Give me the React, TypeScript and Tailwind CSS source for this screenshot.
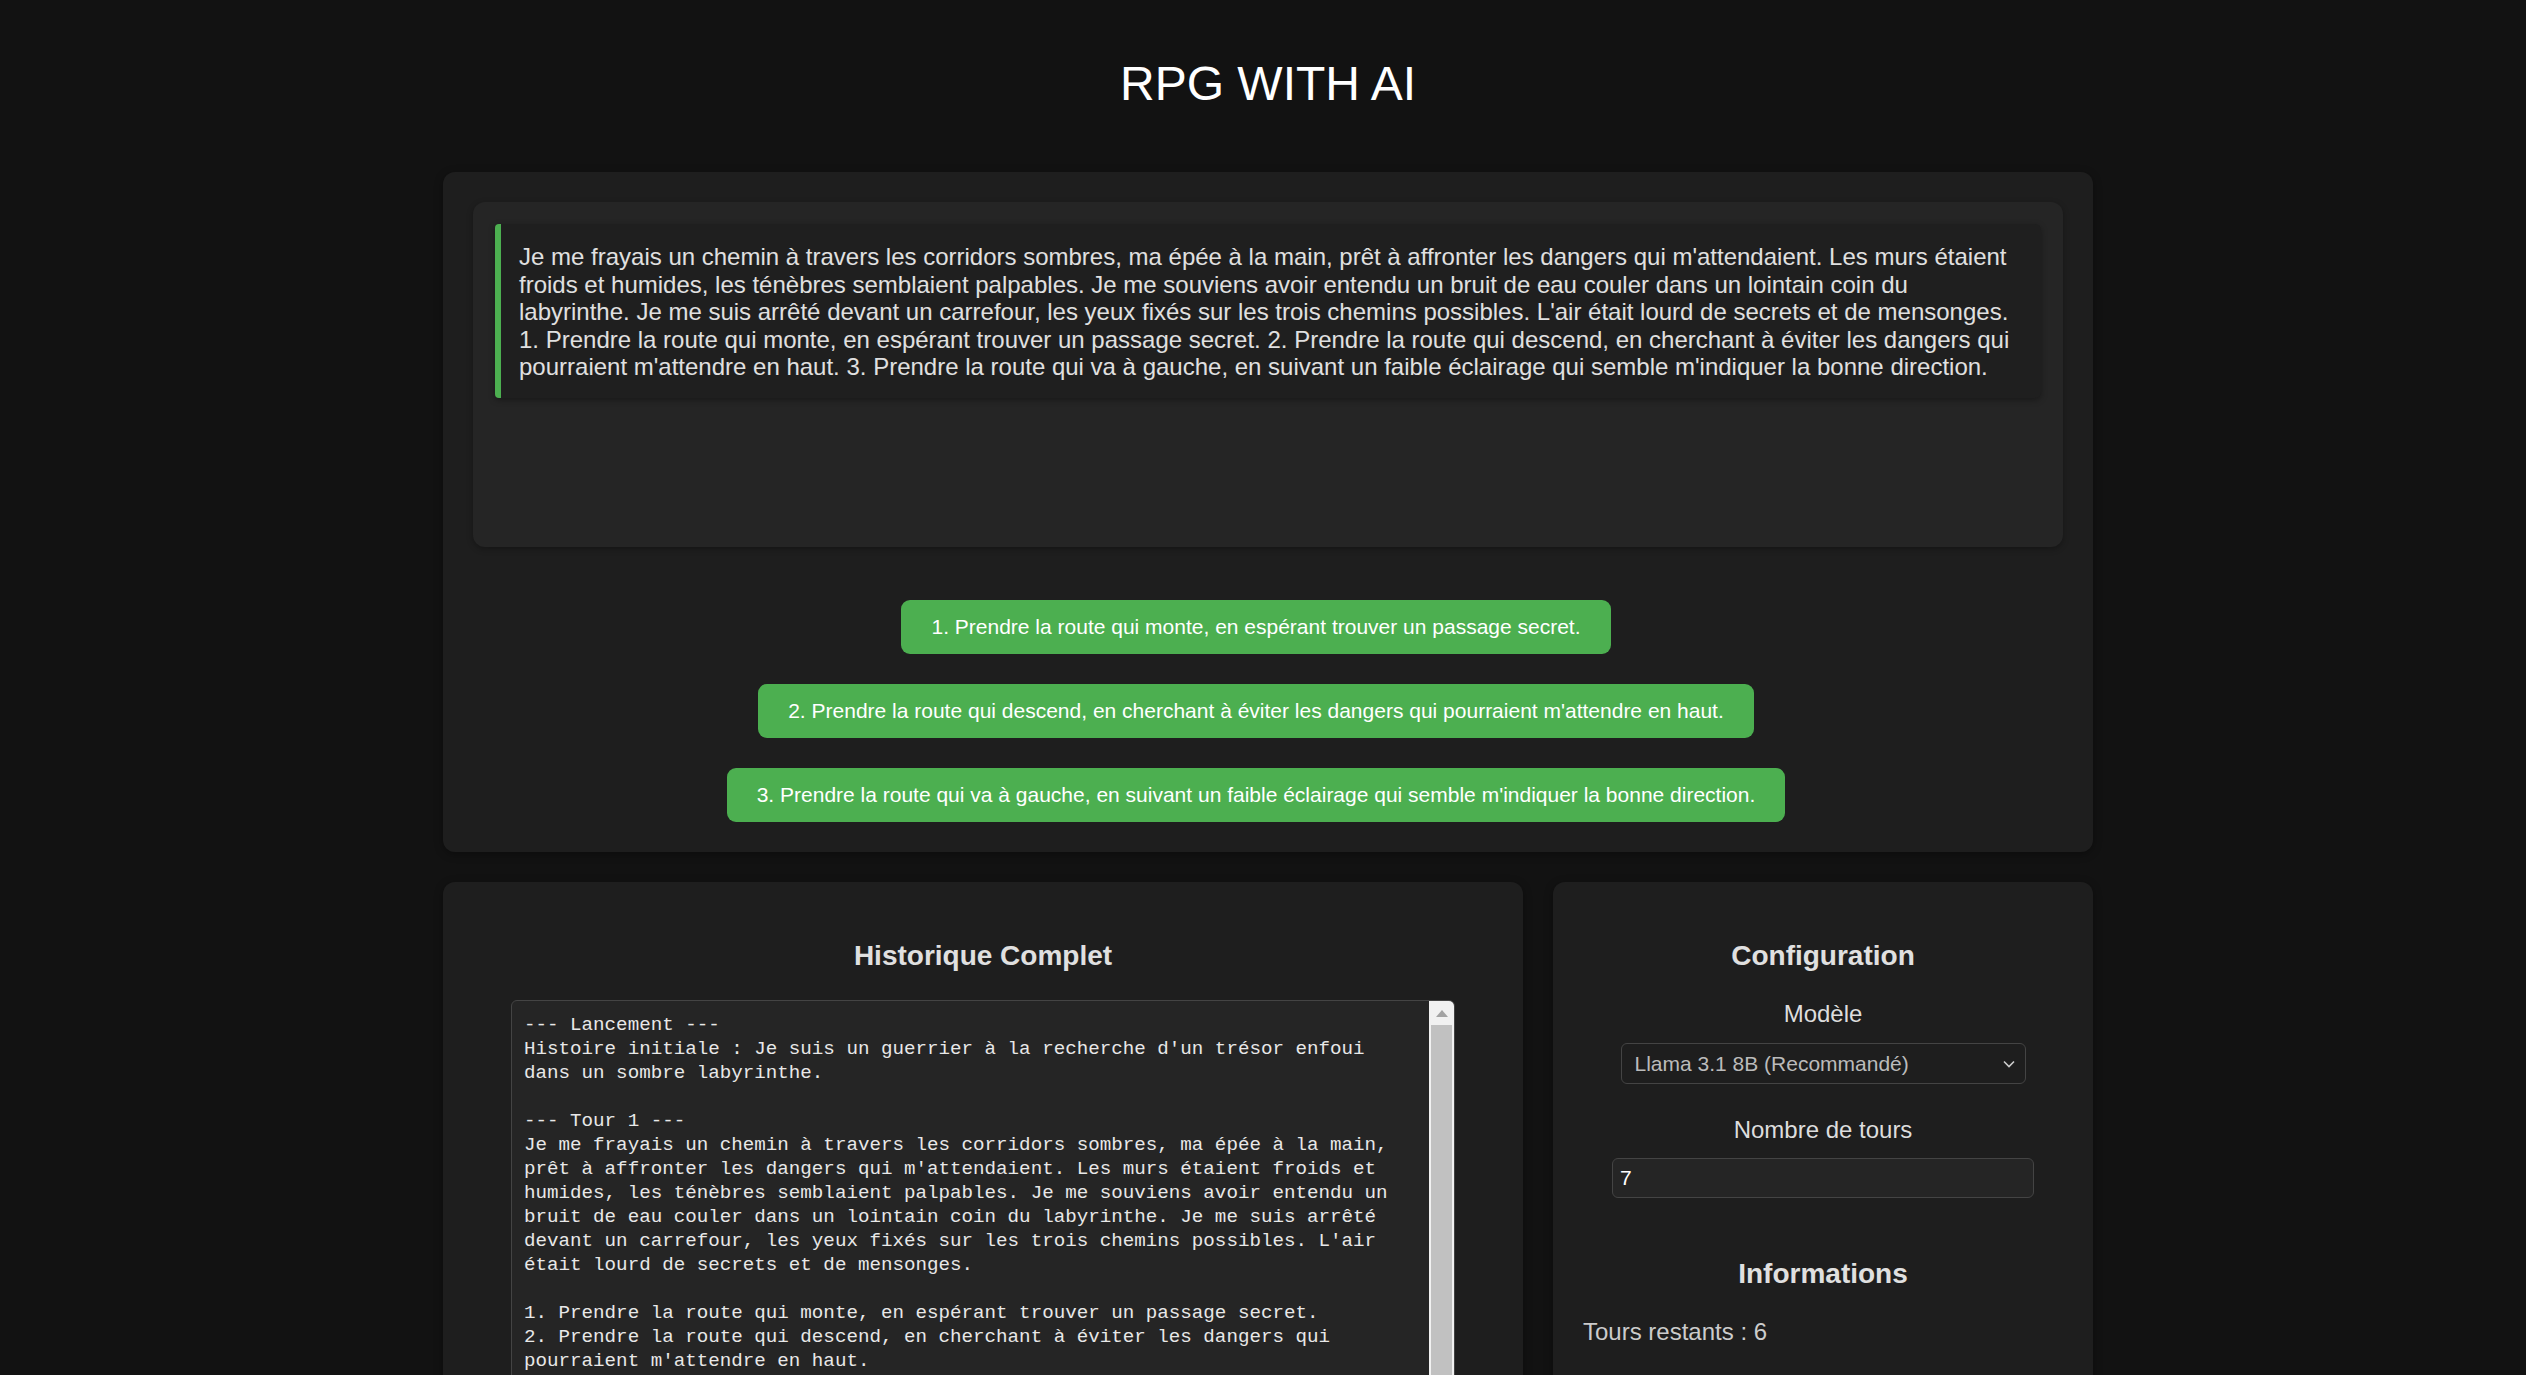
const story =
  "Je me frayais un chemin à travers les corridors sombres, ma épée à la main, prêt à affronter les dangers qui m'attendaient. Les murs étaient froids et humides, les ténèbres semblaient palpables. Je me souviens avoir entendu un bruit de eau couler dans un lointain coin du labyrinthe. Je me suis arrêté devant un carrefour, les yeux fixés sur les trois chemins possibles. L'air était lourd de secrets et de mensonges.\n1. Prendre la route qui monte, en espérant trouver un passage secret. 2. Prendre la route qui descend, en cherchant à éviter les dangers qui pourraient m'attendre en haut. 3. Prendre la route qui va à gauche, en suivant un faible éclairage qui semble m'indiquer la bonne direction."

const choices = [
  '1. Prendre la route qui monte, en espérant trouver un passage secret.',
  "2. Prendre la route qui descend, en cherchant à éviter les dangers qui pourraient m'attendre en haut.",
  "3. Prendre la route qui va à gauche, en suivant un faible éclairage qui semble m'indiquer la bonne direction.",
]

const history = `--- Lancement ---
Histoire initiale : Je suis un guerrier à la recherche d'un trésor enfoui
dans un sombre labyrinthe.

--- Tour 1 ---
Je me frayais un chemin à travers les corridors sombres, ma épée à la main,
prêt à affronter les dangers qui m'attendaient. Les murs étaient froids et
humides, les ténèbres semblaient palpables. Je me souviens avoir entendu un
bruit de eau couler dans un lointain coin du labyrinthe. Je me suis arrêté
devant un carrefour, les yeux fixés sur les trois chemins possibles. L'air
était lourd de secrets et de mensonges.

1. Prendre la route qui monte, en espérant trouver un passage secret.
2. Prendre la route qui descend, en cherchant à éviter les dangers qui
pourraient m'attendre en haut.
3. Prendre la route qui va à gauche, en suivant un faible éclairage qui
semble m'indiquer la bonne direction.`

function Heading({ children }: { children: React.ReactNode }) {
  return (
    <h3 className="my-[28px] text-center text-[28px] font-bold leading-[32px] text-[#e0e0e0]">
      {children}
    </h3>
  )
}

export default function App() {
  return (
    <div
      className="h-screen overflow-hidden bg-[#121212] pl-[10px] pt-[56px] text-[#e0e0e0]"
      style={{ fontFamily: '"Liberation Sans", Arial, sans-serif' }}
    >
      <h1 className="text-center text-[48px] font-normal leading-[55px] text-white">RPG WITH AI</h1>

      <div className="mx-auto mt-[61px] w-[1650px]">
        {/* zone de jeu */}
        <div className="rounded-[12px] bg-[#1e1e1e] px-[30px] pt-[30px] pb-[30px] shadow-[0_2px_8px_rgba(0,0,0,0.35)]">
          <div className="h-[345px] rounded-[12px] bg-[#252525] p-[22px] shadow-[0_2px_6px_rgba(0,0,0,0.3)]">
            <div className="whitespace-pre-line rounded-r-[6px] rounded-l-[4px] border-l-[6px] border-[#4caf50] bg-[#1f1f1f] pt-[19px] pb-[17px] pr-[18px] pl-[18px] text-[24px] leading-[27.6px] text-[#e0e0e0] shadow-[0_2px_6px_rgba(0,0,0,0.35)]">
              {story}
            </div>
          </div>

          <div className="mt-[53px] flex flex-col items-center gap-[30px] pr-[24px]">
            {choices.map((c) => (
              <button
                key={c}
                className="rounded-[9px] bg-[#4caf50] px-[30px] py-[15px] text-[21px] leading-[24px] text-white"
              >
                {c}
              </button>
            ))}
          </div>
        </div>

        <div className="mt-[30px] flex gap-[30px]">
          {/* historique */}
          <div className="w-[1080px] rounded-[12px] bg-[#1e1e1e] px-[30px] pt-[30px] shadow-[0_2px_8px_rgba(0,0,0,0.35)]">
            <Heading>Historique Complet</Heading>
            <div className="relative mx-auto flex h-[600px] w-[944px] overflow-hidden rounded-[6px] border border-[#444] bg-[#252525]">
              <div
                className="flex-1 whitespace-pre pt-[12px] pl-[12px] text-[19.2px] leading-[24px] text-[#e8e8e8]"
                style={{ fontFamily: '"Liberation Mono", "DejaVu Sans Mono", monospace' }}
              >
                {history}
              </div>
              <div className="flex w-[25px] flex-col items-center bg-[#f1f1f1]">
                <div className="flex h-[24px] items-center justify-center">
                  <svg width="12" height="7" viewBox="0 0 12 7">
                    <path d="M6 0 L12 7 L0 7 Z" fill="#a3a3a3" />
                  </svg>
                </div>
                <div className="w-[21px] flex-1 bg-[#c1c1c1]" />
              </div>
            </div>
          </div>

          {/* configuration */}
          <div className="w-[540px] rounded-[12px] bg-[#1e1e1e] px-[30px] pt-[30px] shadow-[0_2px_8px_rgba(0,0,0,0.35)]">
            <Heading>Configuration</Heading>
            <div className="mb-[32px] flex flex-col items-center">
              <label className="mb-[15px] text-[24px] leading-[28px] text-[#dddddd]">Modèle</label>
              <div className="flex h-[41px] w-[405px] items-center justify-between rounded-[6px] border border-[#444] bg-[#1e1e1e] pl-[13px] pr-[10px] text-[21px] text-[#bbbbbb]">
                <span>Llama 3.1 8B (Recommandé)</span>
                <svg width="12" height="8" viewBox="0 0 12 8" fill="none">
                  <path d="M1 1.5 L6 6.5 L11 1.5" stroke="#cccccc" strokeWidth="1.6" />
                </svg>
              </div>
            </div>
            <div className="mb-[60px] flex flex-col items-center">
              <label className="mb-[14px] text-[24px] leading-[28px] text-[#dddddd]">Nombre de tours</label>
              <div className="flex h-[40px] w-[422px] items-center rounded-[6px] border border-[#444] bg-[#252525] pl-[7px] text-[21px] text-white">
                7
              </div>
            </div>
            <Heading>Informations</Heading>
            <p className="text-[24px] leading-[28px] text-[#cccccc]">Tours restants : 6</p>
          </div>
        </div>
      </div>
    </div>
  )
}
